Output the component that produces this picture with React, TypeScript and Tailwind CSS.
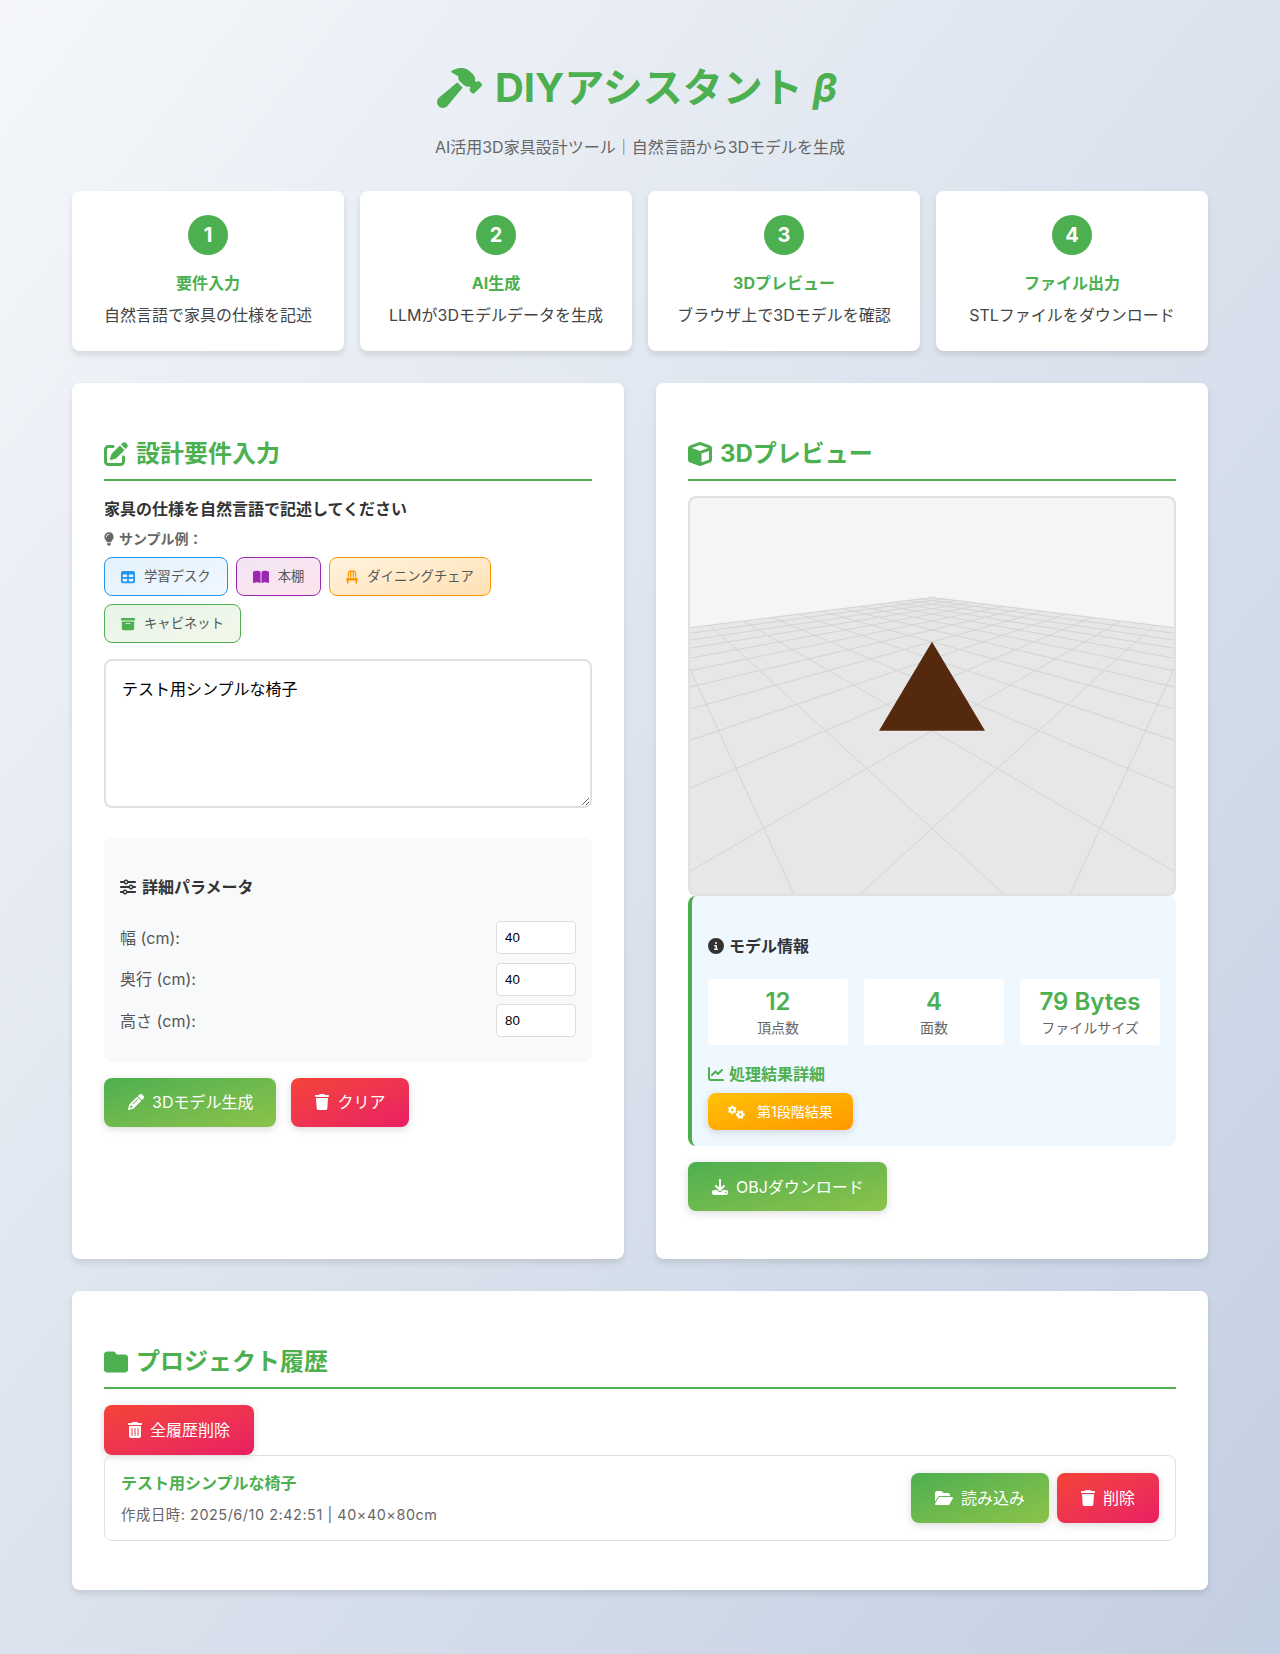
import React from 'react';
import {
  FaHammer, FaPenToSquare, FaCube, FaLightbulb, FaTable, FaBookOpen, FaChair, FaBoxArchive, FaSliders,
  FaPencil, FaTrash, FaTrashCan, FaCircleInfo, FaChartLine, FaGears, FaDownload, FaFolder, FaFolderOpen,
} from 'react-icons/fa6';

const steps = [
  { n: '1', title: '要件入力', desc: '自然言語で家具の仕様を記述' },
  { n: '2', title: 'AI生成', desc: 'LLMが3Dモデルデータを生成' },
  { n: '3', title: '3Dプレビュー', desc: 'ブラウザ上で3Dモデルを確認' },
  { n: '4', title: 'ファイル出力', desc: 'STLファイルをダウンロード' },
];

const params = [
  { label: '幅 (cm):', value: '40' },
  { label: '奥行 (cm):', value: '40' },
  { label: '高さ (cm):', value: '80' },
];

const stats = [
  { value: '12', label: '頂点数' },
  { value: '4', label: '面数' },
  { value: '79 Bytes', label: 'ファイルサイズ' },
];

const greenBtn = 'bg-gradient-to-br from-[#4caf50] to-[#8bc34a]';
const redBtn = 'bg-gradient-to-br from-[#f44336] to-[#e91e63]';

// projection fitted to the floor grid of the preview (canvas origin 690,499)
const CX = 242, YH = 63, A = 928, B = 292, D = 5.47, N = 10;
const project = (a: number, b: number) => {
  const k = a + b;
  return { x: CX + (B * (a - b)) / (D - k), y: YH + A / (D - k) };
};

const gridLines = () => {
  const lines: { x1: number; y1: number; x2: number; y2: number }[] = [];
  for (let i = -N; i <= N; i++) {
    // stop short of the camera plane
    const end = Math.min(N, D - 0.4 - i);
    const p1 = project(i, -N), p2 = project(i, end);
    lines.push({ x1: p1.x, y1: p1.y, x2: p2.x, y2: p2.y });
    const p3 = project(-N, i), p4 = project(end, i);
    lines.push({ x1: p3.x, y1: p3.y, x2: p4.x, y2: p4.y });
  }
  return lines;
};

const Heading = ({ icon, text }: { icon: React.ReactNode; text: string }) => (
  <h2 className="mt-[21px] flex items-center gap-2 border-b-2 border-[#4caf50] pb-2 text-[24px] font-bold leading-[35px] text-[#4caf50]">
    {icon}
    <span>{text}</span>
  </h2>
);

const Preview = () => {
  const back = project(-N, -N), left = project(-N, N), right = project(N, -N);
  return (
    <div className="h-[400px] overflow-hidden rounded-lg border-2 border-[#e0e0e0] bg-[#f5f5f5]">
      <svg width="484" height="396" viewBox="0 0 484 396" className="block">
        <polygon points={`${back.x},${back.y} ${left.x},${left.y} ${left.x},900 ${right.x},900 ${right.x},${right.y}`} fill="#e7e7e7" />
        {gridLines().map((l, i) => (
          <line key={i} x1={l.x1} y1={l.y1} x2={l.x2} y2={l.y2} stroke="#d4d4d4" strokeWidth="1" />
        ))}
        <polygon points="242,143.7 189,232.7 295,232.7" fill="#55290e" />
      </svg>
    </div>
  );
};

export default function App() {
  return (
    <div className="min-h-screen bg-gradient-to-br from-[#f5f7fa] to-[#c3cfe2] font-['Inter','Noto_Sans_CJK_JP',sans-serif] text-[#333]">
      <div className="mx-auto max-w-[1200px] px-8 pb-16 pt-16">
        <header className="text-center">
          <h1 className="flex items-center justify-center gap-[13px] pr-[6px] text-[40px] font-bold leading-[48px] text-[#4caf50]">
            <FaHammer className="h-[40px] w-[45px]" />
            <span>DIYアシスタント<span className="ml-[10px] italic">β</span></span>
          </h1>
          <p className="mt-[23px] text-base leading-6 text-[#666]">AI活用3D家具設計ツール｜自然言語から3Dモデルを生成</p>
        </header>

        <section className="mt-8 grid grid-cols-4 gap-4">
          {steps.map(s => (
            <div key={s.n} className="h-[160px] rounded-lg bg-white p-6 text-center shadow-[0_4px_6px_rgba(0,0,0,0.1)]">
              <div className="mx-auto flex size-10 items-center justify-center rounded-full bg-[#4caf50] text-[20px] font-bold text-white">{s.n}</div>
              <div className="mt-4 text-base font-bold leading-6 text-[#4caf50]">{s.title}</div>
              <div className="mt-2 text-base leading-6 text-[#444]">{s.desc}</div>
            </div>
          ))}
        </section>

        <section className="mt-8 grid grid-cols-2 gap-8">
          <div className="rounded-lg bg-white p-8 shadow-[0_4px_6px_rgba(0,0,0,0.1)]">
            <Heading icon={<FaPenToSquare className="size-[24px]" />} text="設計要件入力" />
            <div className="mt-4 text-base font-bold leading-6 text-[#333]">家具の仕様を自然言語で記述してください</div>
            <div className="mt-[7px] flex items-center gap-[5px] text-sm font-bold leading-[21px] text-[#666]">
              <FaLightbulb className="size-[14px] w-[10px]" />
              <span>サンプル例：</span>
            </div>
            <div className="mt-2 flex flex-wrap gap-2">
              <button className="flex h-[39px] items-center gap-[9px] rounded-lg border border-[#2196f3] bg-gradient-to-br from-[#e3f2fd] to-[#f0f8ff] px-4 text-[13.33px] text-[#555]">
                <FaTable className="size-[14px] text-[#2196f3]" />学習デスク
              </button>
              <button className="flex h-[39px] items-center gap-[9px] rounded-lg border border-[#9c27b0] bg-gradient-to-br from-[#f3e5f5] to-[#fce4ec] px-4 text-[13.33px] text-[#555]">
                <FaBookOpen className="size-[16px] text-[#9c27b0]" />本棚
              </button>
              <button className="flex h-[39px] items-center gap-[9px] rounded-lg border border-[#ff9800] bg-gradient-to-br from-[#fff3e0] to-[#ffe0b2] px-4 text-[13.33px] text-[#555]">
                <FaChair className="size-[14px] w-[12px] text-[#ff9800]" />ダイニングチェア
              </button>
              <button className="flex h-[39px] items-center gap-[9px] rounded-lg border border-[#4caf50] bg-gradient-to-br from-[#e8f5e9] to-[#f1f8e9] px-4 text-[13.33px] text-[#555]">
                <FaBoxArchive className="size-[14px] text-[#4caf50]" />キャビネット
              </button>
            </div>
            <textarea
              readOnly
              value="テスト用シンプルな椅子"
              className="mt-4 block h-[149px] w-full rounded-lg border-2 border-[#e0e0e0] p-4 text-base leading-6 text-black outline-none"
            />
            <div className="mt-[30px] rounded-lg bg-[#f8f9fa] p-4">
              <h3 className="mt-[21px] flex items-center gap-[6px] text-base font-bold leading-6 text-[#333]">
                <FaSliders className="size-4" />詳細パラメータ
              </h3>
              <div className="mt-[22px]">
                {params.map(p => (
                  <div key={p.label} className="mb-2 flex h-[33.5px] items-center justify-between text-base text-[#555]">
                    <label>{p.label}</label>
                    <input
                      readOnly
                      value={p.value}
                      className="h-[33px] w-[80px] rounded border border-[#ddd] bg-white px-2 font-['Liberation_Sans',sans-serif] text-[13.33px] text-black outline-none"
                    />
                  </div>
                ))}
              </div>
            </div>
            <div className="mt-4 flex gap-[15px]">
              <button className={`flex h-[49px] items-center gap-2 rounded-lg pl-6 pr-[23px] text-base text-white shadow-[0_2px_8px_rgba(0,0,0,0.15)] ${greenBtn}`}>
                <FaPencil className="size-4" />3Dモデル生成
              </button>
              <button className={`flex h-[49px] items-center gap-2 rounded-lg px-6 text-base text-white shadow-[0_2px_8px_rgba(0,0,0,0.15)] ${redBtn}`}>
                <FaTrash className="size-4 w-[14px]" />クリア
              </button>
            </div>
          </div>

          <div className="rounded-lg bg-white p-8 pb-12 shadow-[0_4px_6px_rgba(0,0,0,0.1)]">
            <Heading icon={<FaCube className="size-[24px]" />} text="3Dプレビュー" />
            <div className="mt-[15px]">
              <Preview />
            </div>
            <div className="rounded-lg border-l-4 border-[#4caf50] bg-[#f0f8ff] p-4">
              <h3 className="mt-[22px] flex items-center gap-[5px] text-base font-bold leading-6 text-[#333]">
                <FaCircleInfo className="size-4" />モデル情報
              </h3>
              <div className="mt-[21px] grid grid-cols-3 gap-4">
                {stats.map(s => (
                  <div key={s.label} className="flex h-[66px] flex-col items-center justify-center rounded bg-white">
                    <div className="text-[24px] font-semibold leading-[30px] text-[#4caf50]">{s.value}</div>
                    <div className="text-sm leading-[21px] text-[#666]">{s.label}</div>
                  </div>
                ))}
              </div>
              <div className="mt-[17px] flex items-center gap-[5px] text-base font-bold leading-6 text-[#4caf50]">
                <FaChartLine className="size-4" />処理結果詳細
              </div>
              <button className="mt-[7px] flex h-[37px] items-center gap-3 rounded-lg bg-gradient-to-br from-[#ffc107] to-[#ff9800] px-5 text-sm text-white shadow-[0_2px_8px_rgba(0,0,0,0.15)]">
                <FaGears className="size-4 w-[17px]" />第1段階結果
              </button>
            </div>
            <button className={`mt-4 flex h-[49px] items-center gap-2 rounded-lg pl-6 pr-[23px] text-base text-white shadow-[0_2px_8px_rgba(0,0,0,0.15)] ${greenBtn}`}>
              <FaDownload className="size-4" />OBJダウンロード
            </button>
          </div>
        </section>

        <section className="mt-8 rounded-lg bg-white p-8 shadow-[0_4px_6px_rgba(0,0,0,0.1)]">
          <Heading icon={<FaFolder className="size-[24px]" />} text="プロジェクト履歴" />
          <button className={`mt-4 flex h-[50px] items-center gap-2 rounded-lg px-6 text-base text-white shadow-[0_2px_8px_rgba(0,0,0,0.15)] ${redBtn}`}>
            <FaTrashCan className="size-4 w-[14px]" />全履歴削除
          </button>
          <div className="mb-[17px] flex h-[86px] items-center justify-between rounded-lg border border-[#e0e0e0] px-4">
            <div>
              <div className="text-base font-bold leading-6 text-[#4caf50]">テスト用シンプルな椅子</div>
              <div className="mt-[9px] text-[14.4px] leading-[21px] tracking-[0.55px] text-[#666]">作成日時: 2025/6/10 2:42:51 | 40×40×80cm</div>
            </div>
            <div className="flex gap-2">
              <button className={`flex h-[50px] items-center gap-2 rounded-lg px-6 text-base text-white shadow-[0_2px_8px_rgba(0,0,0,0.15)] ${greenBtn}`}>
                <FaFolderOpen className="size-4 w-[18px]" />読み込み
              </button>
              <button className={`flex h-[50px] items-center gap-2 rounded-lg px-6 text-base text-white shadow-[0_2px_8px_rgba(0,0,0,0.15)] ${redBtn}`}>
                <FaTrash className="size-4 w-[14px]" />削除
              </button>
            </div>
          </div>
        </section>
      </div>
    </div>
  );
}
